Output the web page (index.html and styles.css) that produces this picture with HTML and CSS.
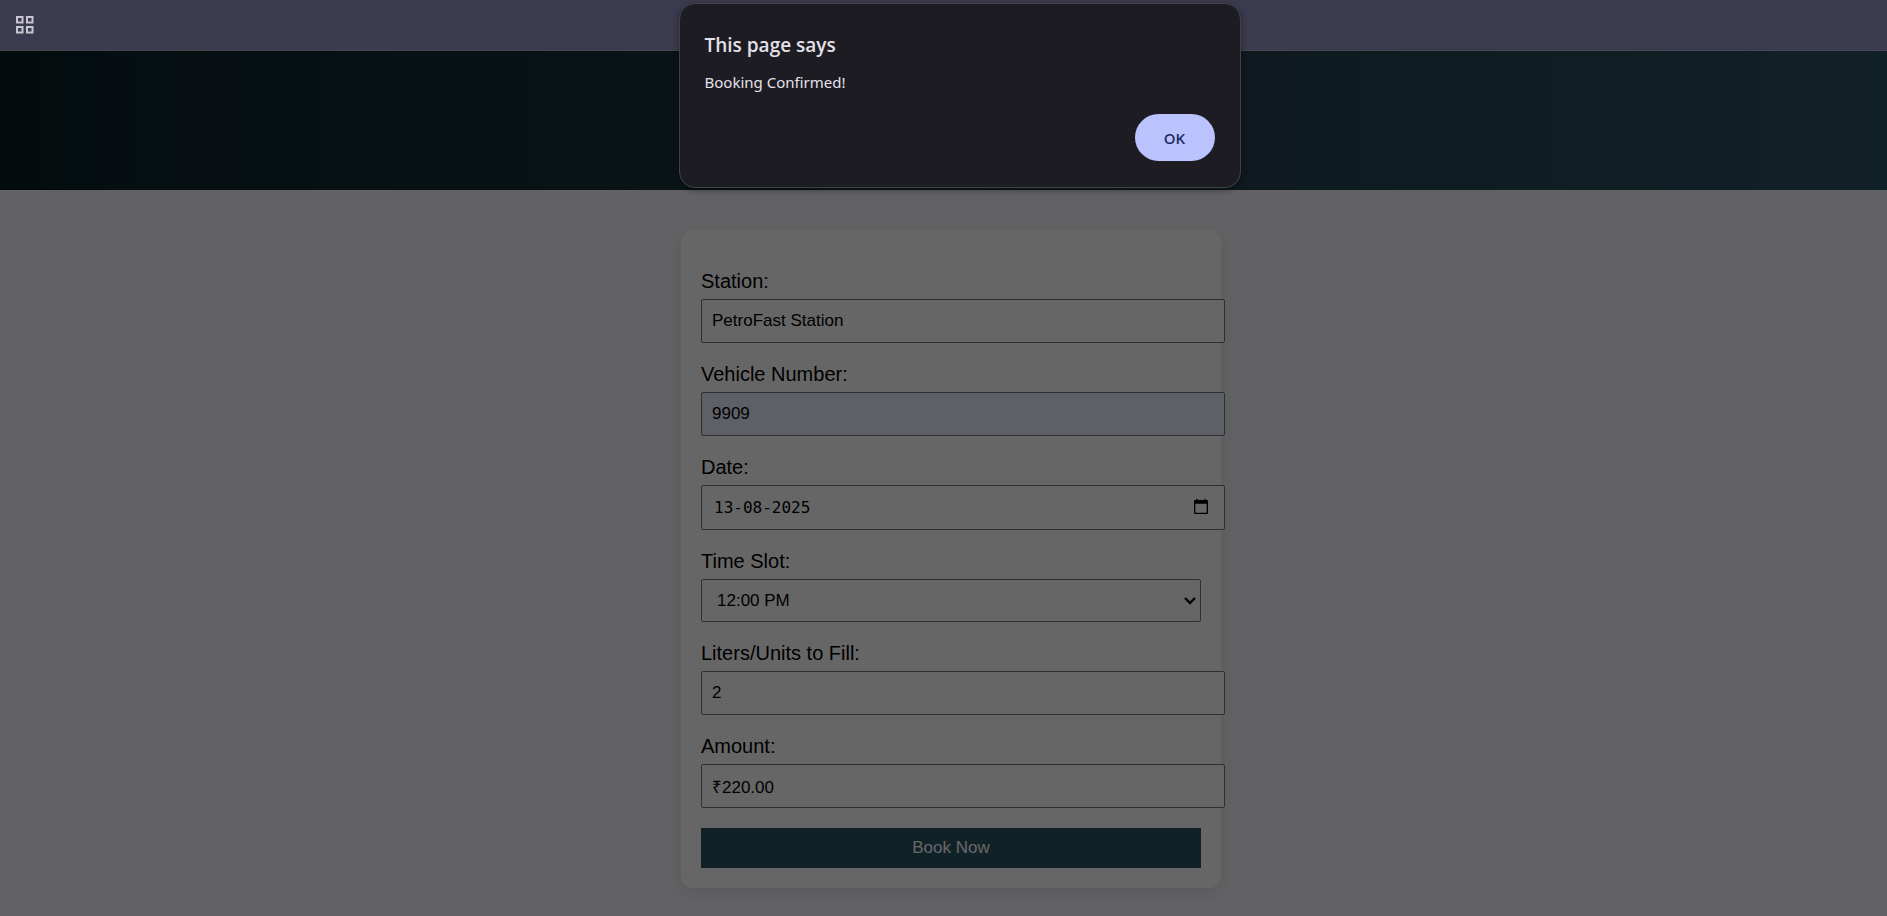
FILE: index.html
```html
<!DOCTYPE html>
<html lang="en">
<head>
<meta charset="utf-8">
<meta name="viewport" content="width=device-width, initial-scale=1">
<title>Book a Slot</title>
<link rel="stylesheet" href="styles.css">
</head>
<body>
<nav class="toolbar">
  <button class="apps" type="button" aria-label="Tab groups">
    <svg viewBox="0 0 18 18" width="18" height="18" fill="none" stroke="currentColor" stroke-width="2"><path d="M1 1h5.500v5.500H1zM11 1h5.500v5.500H11zM1 11h5.500v5.500H1zM11 11h5.500v5.500H11z"/></svg>
  </button>
</nav>
<div class="page">
  <header class="banner"></header>
  <main class="content">
    <form class="card">
      <div class="field">
        <label for="station">Station:</label>
        <input class="control" id="station" type="text" value="PetroFast Station" readonly>
      </div>
      <div class="field">
        <label for="vehicle">Vehicle Number:</label>
        <input class="control filled" id="vehicle" type="text" value="9909">
      </div>
      <div class="field">
        <label for="date">Date:</label>
        <div class="wrap wide">
          <input class="control date" id="date" type="text" value="13-08-2025">
          <svg class="calendar" viewBox="0 0 14 15" width="14" height="15"><path d="M2 0h1.500v1h7V0H12v1h1q1 0 1 1v12q0 1-1 1H1q-1 0-1-1V2q0-1 1-1h1zM1.300 4.800v8.900h11.400V4.800z" fill-rule="evenodd"/></svg>
        </div>
      </div>
      <div class="field">
        <label for="slot">Time Slot:</label>
        <div class="wrap">
          <select class="control slot" id="slot"><option>12:00 PM</option></select>
          <svg class="chevron" viewBox="0 0 12 8" width="12" height="8" fill="none" stroke="currentColor" stroke-width="2.400"><path d="M1 1l5 5 5-5"/></svg>
        </div>
      </div>
      <div class="field">
        <label for="liters">Liters/Units to Fill:</label>
        <input class="control" id="liters" type="text" value="2">
      </div>
      <div class="field">
        <label for="amount">Amount:</label>
        <input class="control" id="amount" type="text" value="₹220.00" readonly>
      </div>
      <button class="submit" type="button">Book Now</button>
    </form>
  </main>
  <div class="scrim"></div>
</div>
<section class="dialog" role="alertdialog" aria-labelledby="dialog-title">
  <h2 id="dialog-title">This page says</h2>
  <p>Booking Confirmed!</p>
  <button class="ok" type="button">OK</button>
</section>
</body>
</html>
```

FILE: styles.css
```css
* { box-sizing: border-box; }
body {
  margin: 0;
  min-height: 100vh;
  display: flex;
  flex-direction: column;
  overflow: hidden;
  font: 20px/23px "Liberation Sans", Arial, sans-serif;
  color: #000;
}
.toolbar {
  height: 51px;
  padding: 16px;
  background: #3a3b4e;
  border-bottom: 1px solid #46464c;
}
.apps {
  display: block;
  padding: 0;
  border: 0;
  background: none;
  color: #c7c5d0;
}
.apps svg, .calendar, .chevron { display: block; }
.page {
  position: relative;
  flex: 1;
  background: #f4f6f9;
}
.banner {
  height: 139px;
  background: linear-gradient(to right, #0a1f24, #203a43, #2c5364);
}
.content {
  display: flex;
  justify-content: center;
  padding: 40px 0 28px 15px;
}
.card {
  width: 540px;
  padding: 20px;
  border-radius: 12px;
  background: #fff;
  box-shadow: 0 5px 19px rgba(0, 0, 0, .1);
}
.field { margin-top: 20px; }
label { display: block; margin-bottom: 6px; }
.control {
  display: block;
  width: calc(100% + 24px);
  height: 44px;
  margin: 0;
  padding: 0 12px 0 10px;
  border: 1px solid #767676;
  border-radius: 2px;
  background: #fff;
  color: #000;
  font: 17px/20px "Liberation Sans", Arial, sans-serif;
}
.filled { background: #e8f0fe; }
.wrap { position: relative; }
.wide { width: calc(100% + 24px); }
.date {
  width: 100%;
  height: 45px;
  padding-left: 12px;
  font: 16px/20px "DejaVu Sans Mono", monospace;
}
.slot {
  width: 100%;
  height: 43px;
  padding-left: 15px;
  appearance: none;
}
.calendar { position: absolute; top: 14px; right: 17px; }
.chevron { position: absolute; top: 18px; right: 5px; }
.submit {
  display: block;
  width: 100%;
  height: 40px;
  margin-top: 20px;
  border: 0;
  background: #2c5364;
  color: #fff;
  font: 17px/20px "Liberation Sans", Arial, sans-serif;
}
.scrim {
  position: absolute;
  inset: 0;
  background: rgba(0, 0, 0, .6);
}
.dialog {
  position: absolute;
  top: 3px;
  left: calc(50% + 16px);
  transform: translateX(-50%);
  display: flex;
  flex-direction: column;
  width: 562px;
  padding: 26px 25px;
  border: 1px solid #414147;
  border-radius: 16px;
  background: #1d1c22;
  color: #e5e1e9;
  font-family: "Open Sans", "Noto Sans", sans-serif;
  box-shadow: 0 2px 6px rgba(0, 0, 0, .4);
}
.dialog h2 { margin: 0; font-size: 19px; line-height: 30px; font-weight: 600; }
.dialog p { margin: 8px 0 18px; font-family: "Noto Sans", sans-serif; font-size: 15px; line-height: 28px; }
.ok {
  align-self: flex-end;
  width: 80px;
  height: 47px;
  border: 0;
  border-radius: 24px;
  background: #bbc3ff;
  color: #222c61;
  font: 600 15px/20px "Open Sans", "Noto Sans", sans-serif;
}
```
